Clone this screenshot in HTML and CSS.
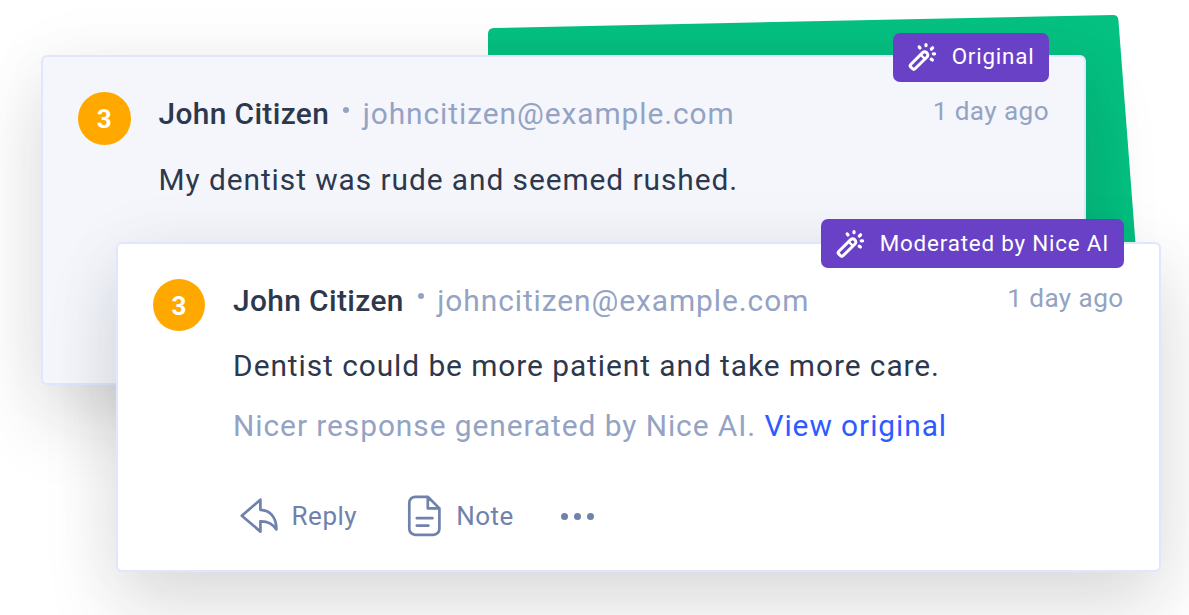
FILE: index.html
```html
<!DOCTYPE html>
<html lang="en">
<head>
<meta charset="utf-8">
<title>Nice AI moderation</title>
<link rel="stylesheet" href="styles.css">
</head>
<body>
<svg class="symbols" aria-hidden="true">
  <symbol id="wand" viewBox="0 0 30 30">
    <g fill="none" stroke="currentColor" stroke-linecap="round" stroke-linejoin="round">
      <path stroke-width="3" d="M3.700 22.500 15.600 10.600a2.800 2.800 0 0 1 4 0l.4.4a2.800 2.800 0 0 1 0 4L8 26.800a1.700 1.700 0 0 1-2.400 0l-1.900-1.900a1.700 1.700 0 0 1 0-2.400Z"/>
      <path stroke-width="2.4" d="m13.900 13 3.700 3.700"/>
      <path stroke-width="3.2" d="M19 2.500v1.200M12.200 4.900l.8 1.100M25.600 5.800l-1.200 1.200M27.600 11.800h-1.300M25.400 18l-1.200-.9"/>
    </g>
  </symbol>
</svg>
<main class="stage">
  <svg class="backdrop" viewBox="0 0 1189 615" aria-hidden="true">
    <path fill="#05c181" d="M494 28 1113 15Q1118 15 1118.400 20L1136 250H488V34Q488 28 494 28Z"/>
  </svg>

  <article class="card card-original">
    <div class="badge"><svg class="wand"><use href="#wand"/></svg><span>Original</span></div>
    <div class="score">3</div>
    <div class="body">
      <header class="head">
        <strong class="name">John Citizen</strong><i class="dot"></i><span class="email">johncitizen@example.com</span>
        <time class="time">1 day ago</time>
      </header>
      <p class="message">My dentist was rude and seemed rushed.</p>
    </div>
  </article>

  <article class="card card-moderated">
    <div class="badge"><svg class="wand"><use href="#wand"/></svg><span>Moderated by Nice AI</span></div>
    <div class="score">3</div>
    <div class="body">
      <header class="head">
        <strong class="name">John Citizen</strong><i class="dot"></i><span class="email">johncitizen@example.com</span>
        <time class="time">1 day ago</time>
      </header>
      <p class="message">Dentist could be more patient and take more care.</p>
      <p class="note-line">Nicer response generated by Nice AI. <a class="link">View original</a></p>
      <footer class="actions">
        <span class="action reply"><svg width="40" height="42" viewBox="0 0 40 42"><path d="M20.400 4.700 1.800 20.700 20.400 36.600V26.300C27.500 26.100 32.500 28.300 36.400 34.400 36.400 22 30 15.200 20.400 14.800Z"/></svg><span>Reply</span></span>
        <span class="action note"><svg width="34" height="42" viewBox="0 0 34 42"><path d="M8.300 1.800H20.800L32.400 13.400V33.800a6 6 0 0 1-6 6H8.300a6 6 0 0 1-6-6V7.800a6 6 0 0 1 6-6ZM20.800 1.800V13.400H32.400M9.800 23.200H25.400M9.800 30.600H21.400"/></svg><span>Note</span></span>
        <span class="more"><i></i><i></i><i></i></span>
      </footer>
    </div>
  </article>
</main>
</body>
</html>
```
FILE: styles.css
```css
body {
  margin: 0;
  background: #fff;
  font-family: Roboto, sans-serif;
  color: #2e384d;
}

.symbols {
  position: absolute;
  width: 0;
  height: 0;
}

.stage {
  position: relative;
  width: 1189px;
  height: 615px;
  overflow: hidden;
}

.backdrop {
  position: absolute;
  inset: 0;
}

/* The two cards overlap on the stage */
.card {
  position: absolute;
  box-sizing: border-box;
  display: flex;
  gap: 28px;
  width: 1045px;
  height: 330px;
  padding: 35px 35px 0 35.500px;
  border: 2px solid #e0e6ff;
  border-radius: 6px;
  box-shadow: 0 37px 75px rgba(20, 22, 30, 0.130), 0 4px 75px rgba(20, 22, 30, 0.050);
  white-space: nowrap;
}

.card-original {
  left: 41px;
  top: 55px;
  background: #f4f6fc;
}

.card-moderated {
  left: 115.600px;
  top: 241.600px;
  background: #fff;
}

.badge {
  position: absolute;
  top: -24.500px;
  right: 35px;
  box-sizing: border-box;
  display: flex;
  align-items: center;
  gap: 14.500px;
  height: 49px;
  padding: 0 14.500px 0 14.500px;
  border-radius: 7px;
  background: #6941c6;
  color: #fff;
  font-size: 22.400px;
  line-height: 46px;
  letter-spacing: 0.800px;
}

.badge span {
  height: 48px;
}

.wand {
  width: 30px;
  height: 30px;
}

.score {
  flex: none;
  width: 52.500px;
  height: 52.500px;
  margin-left: -0.500px;
  border-radius: 50%;
  background: #ffa900;
  color: #fff;
  font-size: 26px;
  font-weight: 700;
  line-height: 54px;
  text-align: center;
}

.body {
  flex: 1;
}

.head {
  display: flex;
  align-items: center;
  height: 43px;
}

.name {
  font-size: 29.870px;
  font-weight: 500;
  letter-spacing: 0.370px;
}

.dot {
  width: 6px;
  height: 6px;
  margin: -8px 13.500px 0 14px;
  border-radius: 50%;
  background: #94a3c4;
}

.email {
  color: #94a3c4;
  font-size: 29.870px;
  letter-spacing: 0.940px;
}

.time {
  margin: -5px 0 0 auto;
  color: #94a3c4;
  font-size: 26.130px;
  letter-spacing: 0.420px;
}

.message {
  margin: 26.500px 0 0;
  font-size: 29.870px;
  line-height: 36px;
  letter-spacing: 0.940px;
}

.note-line {
  margin: 24px 0 0;
  color: #94a3c4;
  font-size: 29.870px;
  line-height: 36px;
  letter-spacing: 0.940px;
}

.link {
  color: #2e5bff;
}

.actions {
  display: flex;
  align-items: center;
  height: 42px;
  margin-top: 51px;
  padding-left: 6.500px;
  color: #6f82ac;
  font-size: 26px;
}

.action {
  display: flex;
  align-items: center;
  letter-spacing: 0.500px;
}

.action svg {
  fill: none;
  stroke: currentColor;
  stroke-width: 2.700;
  stroke-linecap: round;
  stroke-linejoin: round;
}

.reply {
  gap: 12px;
}

.note {
  gap: 15px;
  margin-left: 50px;
}

.more {
  display: flex;
  gap: 6px;
  margin-left: 47px;
}

.more i {
  width: 7px;
  height: 7px;
  border-radius: 50%;
  background: currentColor;
}
```
